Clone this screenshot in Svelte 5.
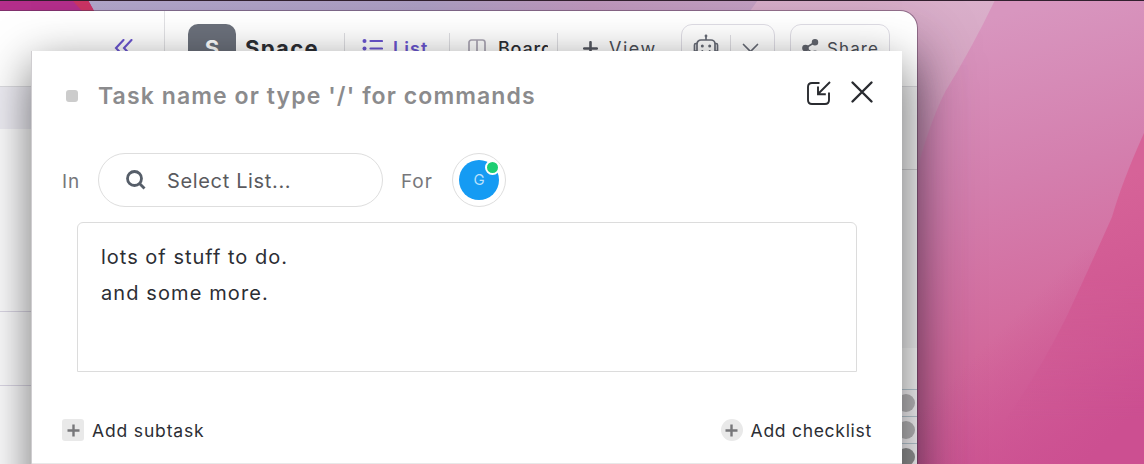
<script>
  const rows = [
    { tone: '#bdbbbe' },
    { tone: '#bab9bb' },
    { tone: '#949495' },
  ];
</script>

<div class="desktop">
  <svg class="wallpaper" viewBox="0 0 1144 464" preserveAspectRatio="none" aria-hidden="true">
    <defs>
      <linearGradient id="base" gradientUnits="userSpaceOnUse" x1="980" y1="20" x2="1100" y2="464">
        <stop offset="0" stop-color="#d896bf" />
        <stop offset=".35" stop-color="#d47fae" />
        <stop offset=".7" stop-color="#d3699c" />
        <stop offset="1" stop-color="#cf5794" />
      </linearGradient>
      <linearGradient id="deep" gradientUnits="userSpaceOnUse" x1="1050" y1="200" x2="1130" y2="440">
        <stop offset="0" stop-color="#d66398" />
        <stop offset=".5" stop-color="#d05792" />
        <stop offset="1" stop-color="#cc4f91" />
      </linearGradient>
      <linearGradient id="reveal" gradientUnits="userSpaceOnUse" x1="0" y1="280" x2="0" y2="420">
        <stop offset="0" stop-color="#fff" />
        <stop offset="1" stop-color="#fff" stop-opacity="0" />
      </linearGradient>
      <mask id="soft"><rect width="1144" height="464" fill="url(#reveal)" /></mask>
      <linearGradient id="corner" gradientUnits="userSpaceOnUse" x1="1000" y1="330" x2="1110" y2="440">
        <stop offset="0" stop-color="#cc4f91" stop-opacity="0" />
        <stop offset="1" stop-color="#cc4f91" />
      </linearGradient>
      <linearGradient id="strip" gradientUnits="userSpaceOnUse" x1="90" y1="0" x2="760" y2="0">
        <stop offset="0" stop-color="#b5a9ce" />
        <stop offset=".5" stop-color="#afa1c5" />
        <stop offset=".75" stop-color="#c29abf" />
        <stop offset="1" stop-color="#c6a2c4" />
      </linearGradient>
      <linearGradient id="fade" x1="0" y1="0" x2="0" y2="1">
        <stop offset="0" stop-color="#dab0cb" />
        <stop offset=".5" stop-color="#d6a3c1" />
        <stop offset="1" stop-color="#cc8bb1" />
      </linearGradient>
    </defs>
    <rect width="1144" height="464" fill="url(#base)" />
    <path d="M750 0H995Q972 48 945 92Q930 122 917 170L750 170Z" fill="url(#fade)" />
    <rect x="917" y="250" width="227" height="214" fill="url(#corner)" />
    <path d="M1144 133Q1122 182 1112 217Q1092 262 1066 318Q1020 410 970 464H1144Z" fill="url(#deep)" mask="url(#soft)" />
    <path d="M0 0H758L748 14H0Z" fill="url(#strip)" />
    <path d="M0 0H88L94 11H0Z" fill="#b82f8d" />
    <path d="M72 0H88L94 11H82Z" fill="#cf3565" />
    <rect width="1144" height="1" fill="#32202f" />
  </svg>

  <section class="window">
    <header class="bar">
      <div class="side-head">
        <svg width="20" height="18" viewBox="0 0 20 18" fill="none" stroke="#6a55d0" stroke-width="2.1" stroke-linecap="round"><path d="M9.500 1 2 9l7.500 8M17.500 1 10 9l7.500 8" /></svg>
      </div>
      <div class="badge">S</div>
      <div class="space">Space</div>
      <div class="tab list">
        <svg width="21" height="20" viewBox="0 0 21 20" fill="none" stroke="#6a55d0" stroke-width="2.2" stroke-linecap="round"><path d="M8.500 3h11.500M8.500 10.500h11.500M8.500 18h11.500" /><g fill="#6a55d0" stroke="none"><circle cx="2.500" cy="3" r="2" /><circle cx="2.500" cy="10.500" r="2" /><circle cx="2.500" cy="18" r="2" /></g></svg>
        <span>List</span>
      </div>
      <div class="tab board">
        <svg width="18" height="18" viewBox="0 0 18 18" fill="none" stroke="#aaa5b3" stroke-width="1.7"><rect x="1" y="1" width="16" height="16" rx="2.500" /><path d="M9 1v16" /></svg>
        <span>Board</span>
      </div>
      <div class="tab view">
        <svg width="15" height="15" viewBox="0 0 15 15" stroke="#555861" stroke-width="2.600" stroke-linecap="round"><path d="M7.500 1.200v12.600M1.200 7.500h12.600" /></svg>
        <span>View</span>
      </div>
      <div class="button bot">
        <svg width="26" height="28" viewBox="0 0 26 28" fill="none" stroke="#676b76" stroke-width="1.700"><path d="M13 6V2" /><circle cx="13" cy="2" r="1.400" fill="#676b76" stroke="none" /><rect x="4" y="6" width="18" height="17" rx="4" /><path d="M4 9.500H3a1.500 1.500 0 0 0-1.500 1.500v6H4M22 9.500h1a1.500 1.500 0 0 1 1.500 1.500v6H22M9 19h8" /><g fill="#676b76" stroke="none"><circle cx="9.300" cy="12" r="1.500" /><circle cx="16.700" cy="12" r="1.500" /><circle cx="9.300" cy="17" r="1" /><circle cx="16.700" cy="17" r="1" /></g></svg>
        <i></i>
        <svg width="17" height="10" viewBox="0 0 17 10" fill="none" stroke="#676b76" stroke-width="1.700" stroke-linecap="round"><path d="m1.500 1.500 7 7 7-7" /></svg>
      </div>
      <div class="button share">
        <svg width="17" height="18" viewBox="0 0 17 18" fill="#63666f" stroke="#63666f" stroke-width="1.500"><path d="M3.500 9 12.500 3.500M3.500 9l9 6" /><circle cx="3.500" cy="9" r="2.600" /><circle cx="13" cy="3.300" r="2.500" /><circle cx="13" cy="14.700" r="2.500" /></svg>
        <span>Share</span>
      </div>
    </header>
    <div class="body">
      <aside class="left">
        <div class="active"></div>
        <div class="gap"></div>
        <div class="item"></div>
        <div class="rest"></div>
      </aside>
      <div class="right">
        <div class="tools"></div>
        <div class="blank"></div>
        <div class="head"></div>
        {#each rows as row}
          <div class="row"><b style="background:{row.tone}"></b></div>
        {/each}
      </div>
    </div>
  </section>

  <section class="modal">
    <div class="title-row">
      <span class="status"></span>
      <span class="title">Task name or type '/' for commands</span>
      <svg class="dock" width="26" height="26" viewBox="0 0 26 26" fill="none" stroke="#292b30" stroke-width="1.900"><path d="M13.500 3H6Q2 3 2 7v13q0 4 4 4h13q4 0 4-4v-7.500" /><path d="M24 2 12 14M12 6.500v7.800h7.800" /></svg>
      <svg class="close" width="24" height="24" viewBox="0 0 24 24" fill="none" stroke="#292b30" stroke-width="2.400" stroke-linecap="round"><path d="m2.500 2.500 19 19M21.500 2.500l-19 19" /></svg>
    </div>

    <div class="target-row">
      <span class="in">In</span>
      <div class="select">
        <svg width="22" height="22" viewBox="0 0 22 22" fill="none" stroke="#565e69" stroke-width="2.800"><circle cx="9.500" cy="9.500" r="7" /><path d="m14.500 14.500 5 5" /></svg>
        <span>Select List...</span>
      </div>
      <span class="for">For</span>
      <div class="assignee">
        <div class="avatar">G</div>
        <span class="online"></span>
      </div>
    </div>

    <div class="editor">
      <div><span class="l1">lots of stuff to do.</span></div>
      <div><span class="l2">and some more.</span></div>
    </div>

    <footer>
      <div class="add">
        <span class="plus square"><svg width="13" height="13" viewBox="0 0 13 13" stroke="#77777a" stroke-width="2.400"><path d="M6.500 .500v12M.500 6.500h12" /></svg></span>
        <span class="sub">Add subtask</span>
      </div>
      <div class="add">
        <span class="plus round"><svg width="13" height="13" viewBox="0 0 13 13" stroke="#77777a" stroke-width="2.400"><path d="M6.500 .500v12M.500 6.500h12" /></svg></span>
        <span class="check">Add checklist</span>
      </div>
    </footer>
  </section>
</div>

<style>
  :global(body) { margin: 0; overflow: hidden; }
  * { box-sizing: border-box; }
  svg { display: block; flex: none; }
  span { white-space: nowrap; }
  .desktop {
    position: relative;
    width: 1144px;
    height: 464px;
    overflow: hidden;
    font-family: Inter, "Liberation Sans", sans-serif;
    color: #2c2e34;
  }
  .wallpaper { position: absolute; inset: 0; width: 100%; height: 100%; }

  .window {
    position: absolute;
    left: 0;
    top: 11px;
    width: 917px;
    height: 500px;
    display: flex;
    flex-direction: column;
    overflow: hidden;
    background: #fff;
    border-radius: 0 17px 0 0;
    box-shadow: 0 0 0 1px rgba(80, 50, 80, .5), 0 36px 60px rgba(45, 35, 60, .55);
  }
  .bar {
    flex: none;
    height: 76px;
    display: flex;
    align-items: center;
    padding-bottom: 1px;
    border-bottom: 1px solid #dcdce0;
  }
  .side-head {
    width: 165px;
    height: 75px;
    display: flex;
    align-items: center;
    justify-content: flex-end;
    padding: 0 30px 0 0;
    border-right: 1px solid #e1e1e4;
  }
  .badge {
    width: 48px;
    height: 48px;
    margin-left: 23px;
    border-radius: 10px;
    background: #6b707b;
    color: #fff;
    font-size: 22px;
    font-weight: 700;
    line-height: 48px;
    text-align: center;
  }
  .space { width: 108px; padding-left: 9px; font-size: 22px; font-weight: 700; letter-spacing: 1.300px; }
  .tab {
    height: 30px;
    display: flex;
    align-items: center;
    border-left: 1px solid #dedee2;
    font-size: 18px;
  }
  .list { width: 105px; padding-left: 17px; gap: 10px; color: #6a55d0; font-weight: 600; letter-spacing: 1.100px; }
  .board { width: 108px; padding-left: 18px; gap: 12px; font-weight: 500; letter-spacing: .8px; }
  .board span { width: 50px; overflow: hidden; }
  .view { width: 124px; padding-left: 25px; gap: 11px; color: #4c4f57; letter-spacing: 1.500px; }
  .view span { padding-top: 1px; }
  .button {
    height: 48px;
    display: flex;
    align-items: center;
    border: 1.500px solid #dfdde5;
    border-radius: 11px;
  }
  .bot { width: 94px; padding-left: 11px; gap: 11px; }
  .bot i { width: 1px; height: 26px; background: #dedde2; }
  .share { width: 100px; margin-left: 15px; padding-left: 11px; gap: 8px; font-size: 17px; letter-spacing: 1.100px; color: #4c4f57; }
  .share span { padding-top: 2px; }

  .body { flex: 1; display: flex; justify-content: space-between; }
  .left { width: 165px; display: flex; flex-direction: column; background: #fcfcfd; }
  .active { height: 42px; background: #eeedf4; }
  .gap { height: 183px; border-bottom: 1px solid #dad6e4; }
  .item { height: 74px; border-bottom: 1px solid #dad6e4; }
  .rest { flex: 1; }
  .right { width: 60px; display: flex; flex-direction: column; background: #f2f2f3; }
  .tools { height: 83px; border-bottom: 1px solid #d0d0d3; }
  .blank { height: 178px; }
  .head { height: 42px; background: #fbfbfb; border-bottom: 1px solid #bccdd7; }
  .row {
    height: 27px;
    display: flex;
    align-items: center;
    justify-content: flex-end;
    padding-right: 2px;
    background: #fbf9fc;
    border-bottom: 1px solid #bccdd7;
  }
  .row b { width: 18px; height: 18px; border-radius: 50%; }

  .modal {
    position: absolute;
    left: 31px;
    top: 51px;
    width: 871px;
    height: 480px;
    display: flex;
    flex-direction: column;
    background: #fff;
    border-left: 1px solid #cfcdd0;
    box-shadow: 0 14px 44px rgba(0, 0, 0, .56);
  }
  .title-row { height: 89px; display: flex; align-items: center; padding: 0 28px 0 34px; }
  .status { width: 12px; height: 12px; border-radius: 3px; background: #ccc; }
  .title { margin-left: 20px; color: #8b8b8d; font-size: 23px; font-weight: 600; letter-spacing: 1.100px; }
  .dock { margin-left: auto; margin-top: -6px; }
  .close { margin-left: 18px; margin-top: -7px; }
  .target-row { height: 80px; display: flex; align-items: center; padding: 0 0 0 30px; font-size: 19px; color: #77777b; letter-spacing: .9px; }
  .in, .for { padding-top: 2px; }
  .in { width: 36px; }
  .select {
    width: 285px;
    height: 54px;
    display: flex;
    align-items: center;
    gap: 20px;
    padding-left: 26px;
    border: 1.500px solid #dedede;
    border-radius: 27px;
    font-size: 20px;
    letter-spacing: .650px;
    color: #5a5a5e;
  }
  .select span { padding-top: 1px; }
  .for { width: 51px; margin-left: 18px; }
  .assignee {
    position: relative;
    width: 54px;
    height: 54px;
    display: grid;
    place-items: center;
    border: 1.500px solid #dedede;
    border-radius: 50%;
  }
  .avatar {
    width: 40px;
    height: 40px;
    border-radius: 50%;
    background: #159bf3;
    color: #b8e0fb;
    font-size: 15px;
    letter-spacing: 0;
    line-height: 40px;
    text-align: center;
  }
  .online {
    position: absolute;
    right: 5px;
    top: 6px;
    width: 15px;
    height: 15px;
    border: 2px solid #fff;
    border-radius: 50%;
    background: #1dce72;
  }
  .editor {
    width: 780px;
    height: 150px;
    margin: 2px 0 0 45px;
    padding: 16px 23px;
    border: 1.500px solid #dcdcdc;
    border-radius: 6px 6px 0 0;
    font-size: 20px;
    line-height: 36px;
  }
  .l1 { letter-spacing: 1px; }
  .l2 { letter-spacing: 1.100px; }
  footer {
    height: 92px;
    display: flex;
    align-items: center;
    justify-content: space-between;
    padding: 25px 30px 0 30px;
    border-bottom: 1px solid #e8e8e8;
    font-size: 17.500px;
  }
  .add { display: flex; align-items: center; gap: 8px; }
  .sub { letter-spacing: .850px; padding-top: 1px; }
  .check { letter-spacing: .720px; padding-top: 1px; }
  .plus { width: 22px; height: 22px; display: grid; place-items: center; background: #e9e9e9; }
  .square { border-radius: 3px; }
  .round { border-radius: 50%; }
</style>
